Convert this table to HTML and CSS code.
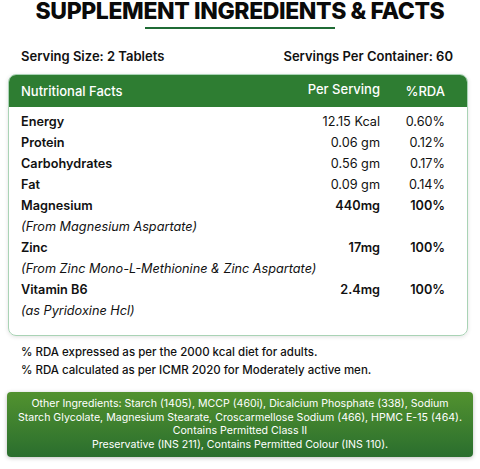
FILE: index.html
```html
<!DOCTYPE html>
<html lang="en">
<head>
    <meta charset="UTF-8">
    <meta name="viewport" content="width=device-width, initial-scale=1.0">
    <title>Supplement Ingredients &amp; Facts</title>
    <link rel="stylesheet" href="styles.css">
</head>
<body>
    <div class="page">
        <h1 class="title">SUPPLEMENT INGREDIENTS &amp; FACTS</h1>
        <div class="title-line"></div>

        <div class="serving">
            <span>Serving Size: 2 Tablets</span>
            <span>Servings Per Container: 60</span>
        </div>

        <!-- Nutrition table -->
        <div class="facts-card">
            <div class="facts-head">
                <span class="col-name">Nutritional Facts</span>
                <span class="col-val">Per Serving</span>
                <span class="col-rda">%RDA</span>
            </div>
            <div class="facts-body">
                <div class="row"><span class="col-name bold">Energy</span><span class="col-val">12.15 Kcal</span><span class="col-rda">0.60%</span></div>
                <div class="row"><span class="col-name bold">Protein</span><span class="col-val">0.06 gm</span><span class="col-rda">0.12%</span></div>
                <div class="row"><span class="col-name bold">Carbohydrates</span><span class="col-val">0.56 gm</span><span class="col-rda">0.17%</span></div>
                <div class="row"><span class="col-name bold">Fat</span><span class="col-val">0.09 gm</span><span class="col-rda">0.14%</span></div>
                <div class="row"><span class="col-name bold">Magnesium</span><span class="col-val bold">440mg</span><span class="col-rda bold">100%</span></div>
                <div class="row sub">(From Magnesium Aspartate)</div>
                <div class="row"><span class="col-name bold">Zinc</span><span class="col-val bold">17mg</span><span class="col-rda bold">100%</span></div>
                <div class="row sub">(From Zinc Mono-L-Methionine &amp; Zinc Aspartate)</div>
                <div class="row"><span class="col-name bold">Vitamin B6</span><span class="col-val bold">2.4mg</span><span class="col-rda bold">100%</span></div>
                <div class="row sub">(as Pyridoxine Hcl)</div>
            </div>
        </div>

        <div class="notes">
            <p>% RDA expressed as per the 2000 kcal diet for adults.</p>
            <p>% RDA calculated as per ICMR 2020 for Moderately active men.</p>
        </div>

        <div class="other">
            Other Ingredients: Starch (1405), MCCP (460i), Dicalcium Phosphate (338), Sodium<br>
            Starch Glycolate, Magnesium Stearate, Croscarmellose Sodium (466), HPMC E-15 (464).<br>
            Contains Permitted Class II<br>
            Preservative (INS 211), Contains Permitted Colour (INS 110).
        </div>
    </div>
</body>
</html>
```

FILE: styles.css
```css
body {
    margin: 0;
    background-color: #ffffff;
    font-family: 'Inter', 'Open Sans', sans-serif;
    color: #111111;
}

.page {
    width: 480px;
    height: 469px;
    overflow: hidden;
}

.title {
    margin: 0;
    text-align: center;
    font-size: 23px;
    font-weight: 800;
    letter-spacing: -0.4px;
    line-height: 22px;
    color: #0a0a0a;
}

.title-line {
    width: 190px;
    height: 2px;
    background-color: #1f6b35;
    margin: 5px auto 0;
}

.serving {
    display: flex;
    justify-content: space-between;
    padding: 18px 27px 0 21px;
    font-size: 13px;
    font-weight: 600;
    line-height: 18px;
}

.facts-card {
    margin: 9px 12px 0 8px;
    border: 1px solid #a9d3b5;
    border-radius: 8px;
    overflow: hidden;
    box-shadow: 0 1px 4px rgba(0, 0, 0, 0.12);
}

.facts-head {
    display: flex;
    align-items: center;
    height: 32px;
    padding: 0 22px 0 12px;
    background-color: #2e7d32;
    color: #ffffff;
    font-size: 13px;
    font-weight: 500;
}

.col-name {
    flex: 1;
}

.col-val {
    width: 110px;
    text-align: right;
}

.col-rda {
    width: 65px;
    text-align: right;
}

.facts-head .col-val {
    position: relative;
    top: -2px;
}

.facts-body {
    padding: 4px 22px 14px 12px;
    font-size: 12.7px;
    line-height: 21px;
}

.row {
    display: flex;
}

.bold {
    font-weight: 600;
}

.sub {
    font-style: italic;
    font-weight: 400;
}

.notes {
    padding: 7px 0 0 21px;
    font-size: 11.5px;
    font-weight: 500;
    line-height: 18px;
}

.notes p {
    margin: 0;
}

.other {
    margin: 13px 7px 0 7px;
    padding: 5px 0 5px;
    border-radius: 4px;
    background: linear-gradient(to bottom, #52922f, #2a6e2e);
    box-shadow: 0 1px 4px rgba(0, 0, 0, 0.25);
    color: #ffffff;
    text-align: center;
    white-space: nowrap;
    font-size: 10.6px;
    line-height: 13.7px;
}
```
